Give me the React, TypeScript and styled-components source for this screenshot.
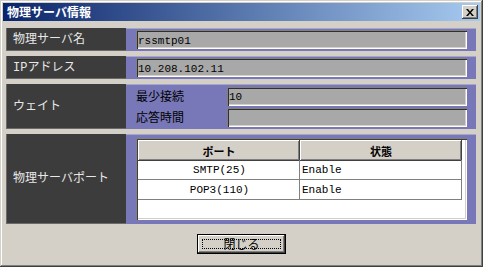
import React from "react";
import styled, { createGlobalStyle } from "styled-components";

const JP = `"Noto Sans CJK JP", "Noto Sans", sans-serif`;
const MONO = `"Liberation Mono", "Noto Sans CJK JP", monospace`;

const GlobalStyle = createGlobalStyle`
  html, body {
    margin: 0;
    padding: 0;
    background: #d4d0c8;
  }
  body {
    font-family: ${JP};
    font-size: 12px;
  }
  * {
    box-sizing: border-box;
  }
`;

const ports = [
  { name: "SMTP(25)", state: "Enable" },
  { name: "POP3(110)", state: "Enable" },
];

function App() {
  return (
    <>
      <GlobalStyle />
      <Window>
        <TitleBar>
          <TitleText>物理サーバ情報</TitleText>
          <CloseButton aria-label="close">
            <svg width="8" height="7" viewBox="0 0 8 7">
              <path d="M0 0h2l2 2.5L6 0h2L5 3.5 8 7H6L4 4.5 2 7H0l3-3.5z" fill="#000" />
            </svg>
          </CloseButton>
        </TitleBar>
        <Body>
          <Row $height={23}>
            <LabelCell>物理サーバ名</LabelCell>
            <FieldCell>
              <Field>rssmtp01</Field>
            </FieldCell>
          </Row>
          <Row $height={23}>
            <LabelCell>IPアドレス</LabelCell>
            <FieldCell>
              <Field>10.208.102.11</Field>
            </FieldCell>
          </Row>
          <Row $height={45}>
            <LabelCell>ウェイト</LabelCell>
            <FieldCell>
              <SubRow>
                <SubLabel>最少接続</SubLabel>
                <Field>10</Field>
              </SubRow>
              <SubRow>
                <SubLabel>応答時間</SubLabel>
                <Field />
              </SubRow>
            </FieldCell>
          </Row>
          <Row $height={90}>
            <LabelCell>物理サーバポート</LabelCell>
            <TableCell>
              <PortTable>
                <HeadCell>ポート</HeadCell>
                <HeadCell>状態</HeadCell>
                {ports.map((p) => (
                  <React.Fragment key={p.name}>
                    <DataCell $center>{p.name}</DataCell>
                    <DataCell>{p.state}</DataCell>
                  </React.Fragment>
                ))}
              </PortTable>
            </TableCell>
          </Row>
        </Body>
        <Footer>
          <DefaultButton>
            <FocusRing>閉じる</FocusRing>
          </DefaultButton>
        </Footer>
      </Window>
    </>
  );
}

export default App;

const Window = styled.div`
  width: 483px;
  height: 267px;
  padding: 3px;
  display: flex;
  flex-direction: column;
  background: #d4d0c8;
  box-shadow: inset -1px -1px #404040, inset 1px 1px #d4d0c8,
    inset -2px -2px #808080, inset 2px 2px #ffffff;
`;

const TitleBar = styled.div`
  height: 18px;
  display: flex;
  align-items: center;
  justify-content: space-between;
  padding: 0 2px 0 4px;
  background: linear-gradient(to right, #0a246a, #a6caf0);
`;

const TitleText = styled.span`
  color: #ffffff;
  font-weight: bold;
  font-size: 12px;
  line-height: 14px;
`;

const CloseButton = styled.button`
  width: 16px;
  height: 14px;
  padding: 0;
  border: none;
  display: flex;
  align-items: center;
  justify-content: center;
  background: #d4d0c8;
  box-shadow: inset -1px -1px #404040, inset 1px 1px #ffffff,
    inset -2px -2px #808080;
`;

const Body = styled.div`
  display: flex;
  flex-direction: column;
  gap: 5px;
  padding: 7px 4px 0 3px;
`;

const Row = styled.div<{ $height: number }>`
  height: ${({ $height }) => $height}px;
  display: grid;
  grid-template-columns: 120px 1fr;
`;

const LabelCell = styled.div`
  display: flex;
  align-items: center;
  padding-left: 7px;
  background: #3c3c3c;
  box-shadow: inset 1px 0 #6a6a6a, inset 0 -1px #6a6a6a;
  color: #e8e8e8;
  font-family: ${MONO};
  font-size: 12px;
  line-height: 14px;
`;

const FieldCell = styled.div`
  display: flex;
  flex-direction: column;
  justify-content: center;
  gap: 2px;
  padding: 0 9px 0 10px;
  background: #7878b8;
  box-shadow: inset 0 1px #a6a6cc;
`;

const Field = styled.div`
  height: 19px;
  flex: 1 1 auto;
  max-height: 19px;
  display: flex;
  align-items: center;
  padding: 2px 2px 0;
  background: #a8a8a8;
  box-shadow: inset 1px 1px #808080, inset 2px 2px #303030,
    inset -1px -1px #ffffff, inset -2px -2px #d4d0c8;
  color: #000000;
  font-family: ${MONO};
  font-size: 11px;
`;

const SubRow = styled.div`
  display: grid;
  grid-template-columns: 91px 1fr;
  align-items: center;
  height: 19px;
`;

const SubLabel = styled.span`
  color: #000000;
  font-size: 12px;
  line-height: 14px;
`;

const TableCell = styled.div`
  padding: 4px 9px 4px 10px;
  background: #7878b8;
  box-shadow: inset 0 1px #a6a6cc;
`;

const PortTable = styled.div`
  height: 100%;
  display: grid;
  grid-template-columns: 162px 162px;
  grid-auto-rows: 20px;
  align-content: start;
  padding: 2px 4px 0 2px;
  background: #ffffff;
  box-shadow: inset 1px 1px #808080, inset 2px 2px #404040,
    inset -1px -1px #ffffff, inset -2px -2px #d4d0c8;
`;

const HeadCell = styled.div`
  height: 21px;
  display: flex;
  align-items: center;
  justify-content: center;
  background: #d4d0c8;
  box-shadow: inset -1px -1px #404040, inset 1px 1px #ffffff,
    inset -2px -2px #808080;
  color: #000000;
  font-weight: bold;
  font-size: 11px;
`;

const DataCell = styled.div<{ $center?: boolean }>`
  display: flex;
  align-items: center;
  justify-content: ${({ $center }) => ($center ? "center" : "flex-start")};
  padding-left: 2px;
  border-right: 1px solid #808080;
  border-bottom: 1px solid #808080;
  color: #000000;
  font-family: ${MONO};
  font-size: 11px;
`;

const Footer = styled.div`
  flex: 1;
  display: flex;
  align-items: center;
  justify-content: center;
`;

const DefaultButton = styled.button`
  width: 89px;
  height: 20px;
  padding: 4px;
  border: 1px solid #000000;
  background: #d4d0c8;
  box-shadow: inset -1px -1px #404040, inset 1px 1px #ffffff,
    inset -2px -2px #808080;
  font-family: ${JP};
`;

const FocusRing = styled.div`
  height: 100%;
  display: flex;
  align-items: center;
  justify-content: center;
  border: 1px dotted #000000;
  color: #000000;
  font-size: 12px;
  line-height: 12px;
`;
